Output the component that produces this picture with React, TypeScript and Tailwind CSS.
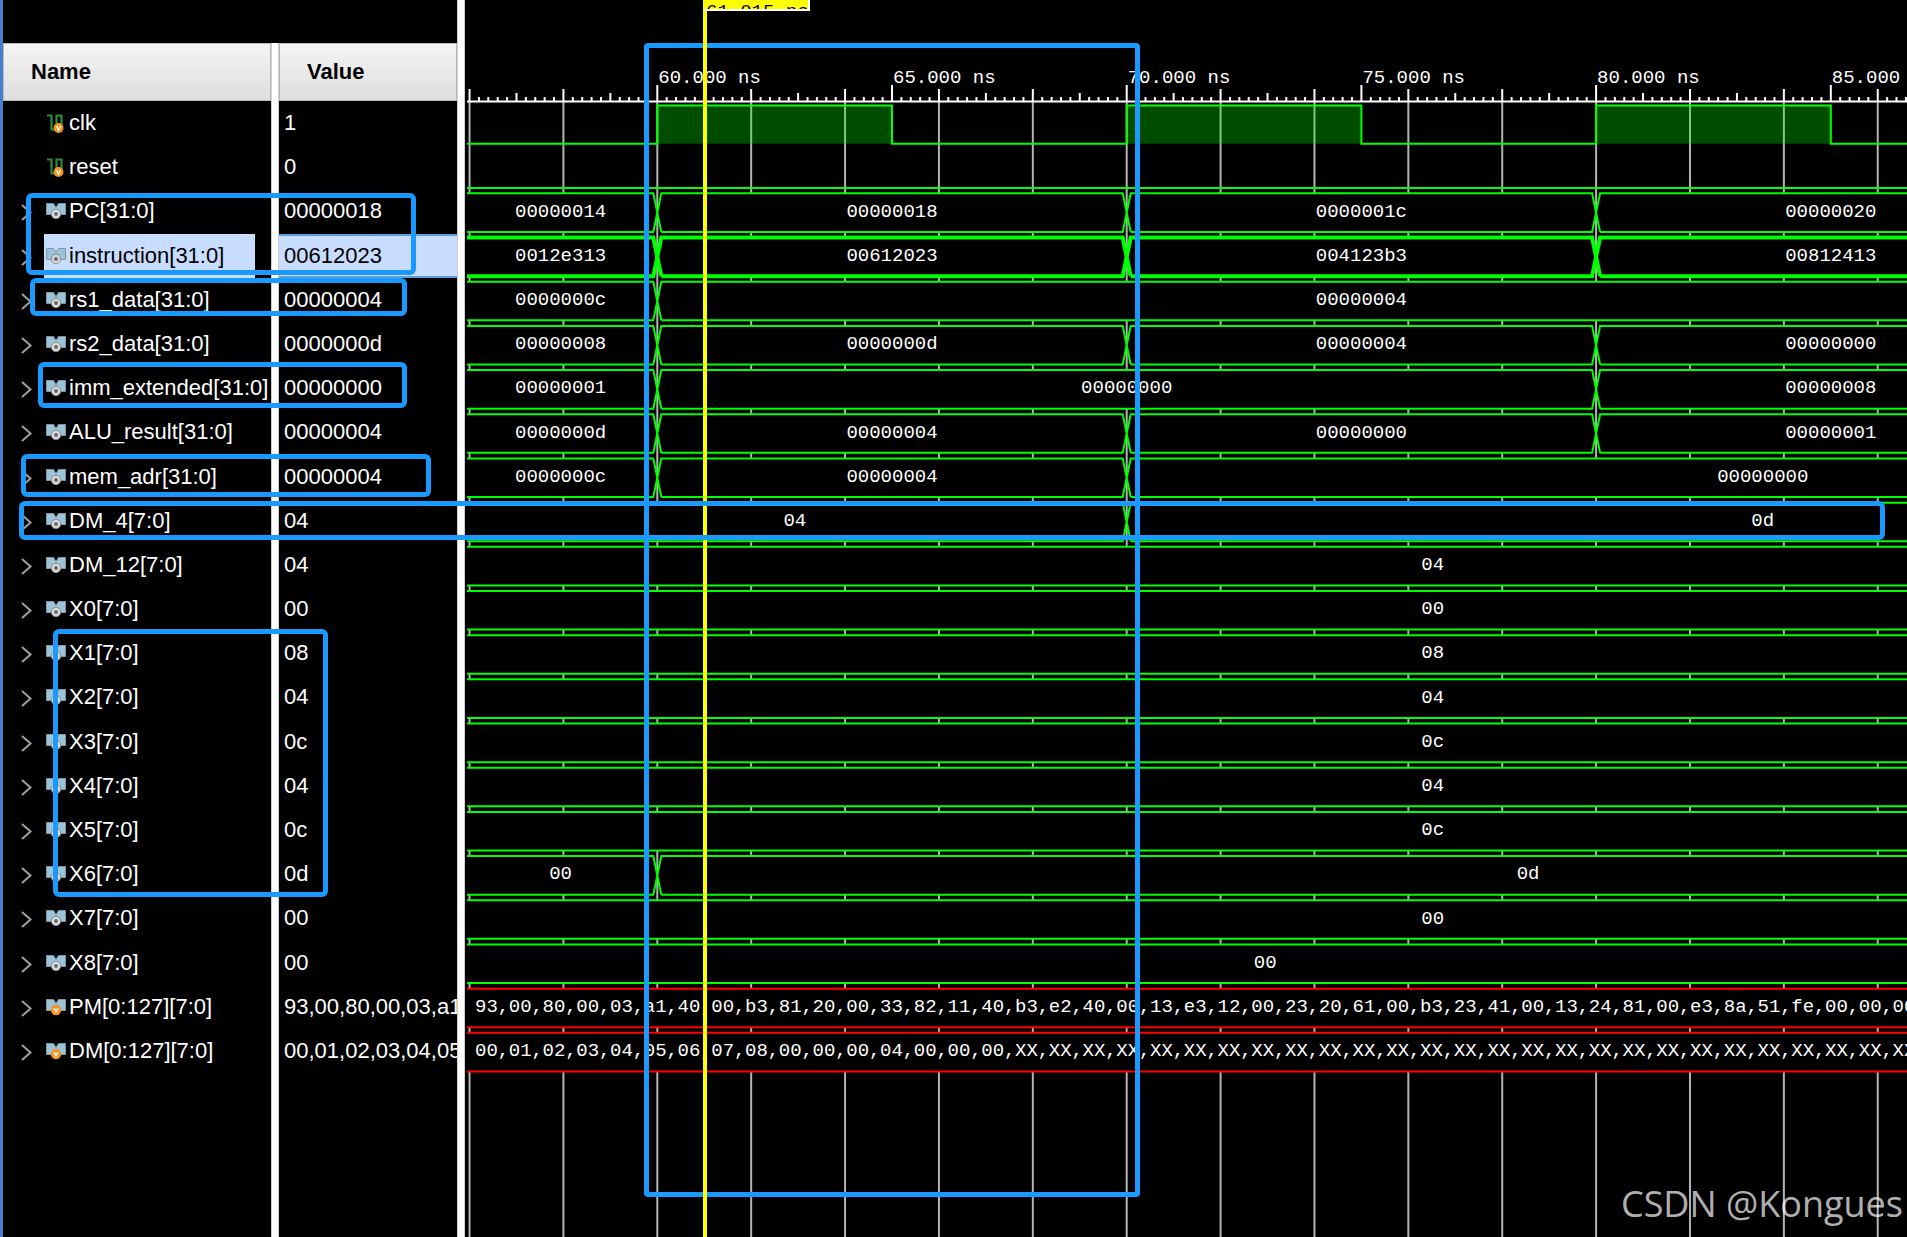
import React from "react";

type Segment = {
  from?: number;
  to?: number;
  value: string;
  labelAt: number;
};

type Signal = {
  name: string;
  value: string;
  kind: "wire" | "bus" | "memory";
  selected?: boolean;
  segments?: Segment[];
  items?: string[];
};

const PM =
  "93,00,80,00,03,a1,40,00,b3,81,20,00,33,82,11,40,b3,e2,40,00,13,e3,12,00,23,20,61,00,b3,23,41,00,13,24,81,00,e3,8a,51,fe,00,00,00";
const DM =
  "00,01,02,03,04,05,06,07,08,00,00,00,04,00,00,00" + ",XX".repeat(27);

const constant = (value: string, labelAt = 76.52): Segment[] => [{ value, labelAt }];

const signals: Signal[] = [
  { name: "clk", value: "1", kind: "wire" },
  { name: "reset", value: "0", kind: "wire" },
  {
    name: "PC[31:0]",
    value: "00000018",
    kind: "bus",
    segments: [
      { to: 60, value: "00000014", labelAt: 57.94 },
      { from: 60, to: 70, value: "00000018", labelAt: 65 },
      { from: 70, to: 80, value: "0000001c", labelAt: 75 },
      { from: 80, value: "00000020", labelAt: 85 },
    ],
  },
  {
    name: "instruction[31:0]",
    value: "00612023",
    kind: "bus",
    selected: true,
    segments: [
      { to: 60, value: "0012e313", labelAt: 57.94 },
      { from: 60, to: 70, value: "00612023", labelAt: 65 },
      { from: 70, to: 80, value: "004123b3", labelAt: 75 },
      { from: 80, value: "00812413", labelAt: 85 },
    ],
  },
  {
    name: "rs1_data[31:0]",
    value: "00000004",
    kind: "bus",
    segments: [
      { to: 60, value: "0000000c", labelAt: 57.94 },
      { from: 60, value: "00000004", labelAt: 75 },
    ],
  },
  {
    name: "rs2_data[31:0]",
    value: "0000000d",
    kind: "bus",
    segments: [
      { to: 60, value: "00000008", labelAt: 57.94 },
      { from: 60, to: 70, value: "0000000d", labelAt: 65 },
      { from: 70, to: 80, value: "00000004", labelAt: 75 },
      { from: 80, value: "00000000", labelAt: 85 },
    ],
  },
  {
    name: "imm_extended[31:0]",
    value: "00000000",
    kind: "bus",
    segments: [
      { to: 60, value: "00000001", labelAt: 57.94 },
      { from: 60, to: 80, value: "00000000", labelAt: 70 },
      { from: 80, value: "00000008", labelAt: 85 },
    ],
  },
  {
    name: "ALU_result[31:0]",
    value: "00000004",
    kind: "bus",
    segments: [
      { to: 60, value: "0000000d", labelAt: 57.94 },
      { from: 60, to: 70, value: "00000004", labelAt: 65 },
      { from: 70, to: 80, value: "00000000", labelAt: 75 },
      { from: 80, value: "00000001", labelAt: 85 },
    ],
  },
  {
    name: "mem_adr[31:0]",
    value: "00000004",
    kind: "bus",
    segments: [
      { to: 60, value: "0000000c", labelAt: 57.94 },
      { from: 60, to: 70, value: "00000004", labelAt: 65 },
      { from: 70, value: "00000000", labelAt: 83.55 },
    ],
  },
  {
    name: "DM_4[7:0]",
    value: "04",
    kind: "bus",
    segments: [
      { to: 70, value: "04", labelAt: 62.93 },
      { from: 70, value: "0d", labelAt: 83.55 },
    ],
  },
  { name: "DM_12[7:0]", value: "04", kind: "bus", segments: constant("04") },
  { name: "X0[7:0]", value: "00", kind: "bus", segments: constant("00") },
  { name: "X1[7:0]", value: "08", kind: "bus", segments: constant("08") },
  { name: "X2[7:0]", value: "04", kind: "bus", segments: constant("04") },
  { name: "X3[7:0]", value: "0c", kind: "bus", segments: constant("0c") },
  { name: "X4[7:0]", value: "04", kind: "bus", segments: constant("04") },
  { name: "X5[7:0]", value: "0c", kind: "bus", segments: constant("0c") },
  {
    name: "X6[7:0]",
    value: "0d",
    kind: "bus",
    segments: [
      { to: 60, value: "00", labelAt: 57.94 },
      { from: 60, value: "0d", labelAt: 78.55 },
    ],
  },
  { name: "X7[7:0]", value: "00", kind: "bus", segments: constant("00") },
  { name: "X8[7:0]", value: "00", kind: "bus", segments: constant("00", 72.95) },
  { name: "PM[0:127][7:0]", value: PM, kind: "memory", items: PM.split(",") },
  { name: "DM[0:127][7:0]", value: DM, kind: "memory", items: DM.split(",") },
];

// Waveform scale, in px
const PX_PER_NS = 46.94;
const HEADER = 101;
const ROW = 972 / signals.length;
const PLOT_END = 4000;

const timeX = (t: number) => 192.3 + (t - 60) * PX_PER_NS;

function range(from: number, to: number, step: number) {
  const out: number[] = [];
  const count = Math.round((to - from) / step);
  for (let i = 0; i <= count; i++) out.push(from + i * step);
  return out;
}

function WireIcon() {
  return (
    <svg className="h-5 w-5 shrink-0" viewBox="0 0 20 20" fill="none">
      <path d="M1 2.5h5M5.500 1.500v15.500M10.500 17V2.500h5V14M5 16.500h6" stroke="#2f8a3e" strokeWidth="2.200" />
      <circle cx="12.5" cy="15" r="5" fill="#f7941e" />
      <path d="M10.500 13l2 4.200 2-4.200" stroke="#fff" strokeWidth="1.400" />
    </svg>
  );
}

function BusIcon({ memory }: { memory: boolean }) {
  return (
    <svg className="h-5 w-5 shrink-0" viewBox="0 0 20 20" fill="none">
      <path d="M.5 2.500h7l2.500 4 2.500-4h7v11h-19z" fill="#9cc4d8" stroke="#7d98a5" />
      {memory ? (
        <>
          <circle cx="10" cy="13" r="5.200" fill="#f7941e" />
          <path d="M8 11l2 4.200L12 11" stroke="#fff" strokeWidth="1.400" />
        </>
      ) : (
        <>
          <circle cx="10" cy="13" r="4.700" fill="#dcdcdc" stroke="#8a8a8a" />
          <circle cx="10" cy="13" r="2" fill="#6b6b6b" />
        </>
      )}
    </svg>
  );
}

function SignalTable() {
  return (
    <table className="flex h-full w-[454px] shrink-0 flex-col bg-black text-[22px] leading-7">
      <thead className="block pt-[43px]">
        <tr className="grid h-[58px] grid-cols-[268px_8px_1fr]">
          <th className="flex items-center border border-[#b9b9bb] bg-linear-to-b from-[#f5f5f5] to-[#dddde0] pl-[27px] text-left font-bold text-black">
            Name
          </th>
          <td className="border-x border-[#cfcfcf] bg-white" />
          <th className="flex items-center border border-[#b9b9bb] bg-linear-to-b from-[#f5f5f5] to-[#dddde0] pl-[27px] text-left font-bold text-black">
            Value
          </th>
        </tr>
      </thead>
      <tbody className="grid h-[972px] auto-rows-fr">
        {signals.map((signal) => (
          <tr key={signal.name} className="grid grid-cols-[268px_8px_1fr] text-white">
            <td className="flex items-center overflow-hidden pl-4">
              <span className="w-[25px] shrink-0">
                {signal.kind !== "wire" && (
                  <button type="button" aria-label={`Expand ${signal.name}`} className="flex">
                    <svg className="h-5 w-4" viewBox="0 0 16 20" fill="none">
                      <path d="M3 4l8.500 7.500L3 19" stroke="#a0a0a0" strokeWidth="2" />
                    </svg>
                  </button>
                )}
              </span>
              <span
                className={`flex h-full items-center gap-[3px] whitespace-nowrap pl-0.5 ${
                  signal.selected ? "w-[211px] bg-[#c8dcff] text-black" : ""
                }`}
              >
                {signal.kind === "wire" ? (
                  <WireIcon />
                ) : (
                  <BusIcon memory={signal.kind === "memory"} />
                )}
                {signal.name}
              </span>
            </td>
            <td className="border-x border-[#cfcfcf] bg-white" />
            <td
              className={`flex items-center overflow-hidden whitespace-nowrap pl-[5px] ${
                signal.selected ? "border-y-2 border-[#5aa0dc] bg-[#c8dcff] text-black" : ""
              }`}
            >
              {signal.value.slice(0, 17)}
            </td>
          </tr>
        ))}
      </tbody>
      <tfoot className="grid flex-1">
        <tr className="grid grid-cols-[268px_8px_1fr]">
          <td />
          <td className="border-x border-[#cfcfcf] bg-white" />
          <td />
        </tr>
      </tfoot>
    </table>
  );
}

function Ruler() {
  return (
    <g stroke="#fff">
      <path d={`M2 ${HEADER + 0.5}H${PLOT_END}`} strokeWidth="2" />
      {range(56, 90, 0.2).map((t) => {
        const tenths = Math.round(t * 10);
        let height = 4;
        if (tenths % 10 === 0) height = 8;
        if (tenths % 20 === 0) height = 12;
        if (tenths % 50 === 0 && tenths >= 600) height = 16;
        return <path key={tenths} d={`M${timeX(t)} ${HEADER}v-${height}`} strokeWidth="2" />;
      })}
      {range(60, 85, 5).map((t) => (
        <text key={t} x={timeX(t) + 1} y="83" fill="#fff" stroke="none">
          {t}.000 ns
        </text>
      ))}
    </g>
  );
}

function BusWave({ signal, row }: { signal: Signal; row: number }) {
  const top = HEADER + row * ROW + 4;
  const bottom = top + 38.6;
  const mid = (top + bottom) / 2;
  const color = signal.kind === "memory" ? "#f00" : "#0f0";
  const width = signal.selected ? 4 : 2;
  const segments = signal.segments ?? [];

  return (
    <g>
      {signal.items && (
        <>
          <path d={`M2 ${top}H${PLOT_END}V${bottom}H2z`} fill="#000" />
          <path
            d={`M2 ${top}H${PLOT_END}M2 ${bottom}H${PLOT_END}`}
            stroke={color}
            strokeWidth={width}
          />
          <text y={mid + 4} fill="#fff">
            {signal.items.map((item, i) => (
              <tspan key={i} x={10 + (i * 135) / 4}>
                {item},
              </tspan>
            ))}
          </text>
        </>
      )}
      {segments.map((s, i) => {
        const left = s.from
          ? `M${timeX(s.from) + 4} ${bottom}L${timeX(s.from)} ${mid}L${timeX(s.from) + 4} ${top}`
          : `M2 ${top}`;
        const fillLeft = s.from ? left : `M2 ${bottom}V${top}`;
        const end = s.to ? timeX(s.to) : PLOT_END;
        const right = s.to
          ? `H${end - 4}L${end} ${mid}L${end - 4} ${bottom}`
          : `H${end}V${bottom}`;
        const close = s.from ? `H${timeX(s.from) + 4}` : "H2";
        return (
          <React.Fragment key={i}>
            <path d={fillLeft + right + close} fill="#000" />
            <path d={left + right + close} fill="none" stroke={color} strokeWidth={width} />
            <text x={timeX(s.labelAt)} y={mid + 4} textAnchor="middle" fill="#fff">
              {s.value}
            </text>
          </React.Fragment>
        );
      })}
    </g>
  );
}

function Waveform() {
  const high = HEADER + 4.5;
  const low = HEADER + 42.7;
  return (
    <svg
      className="block h-full w-full font-['Liberation_Mono',monospace] text-[19px]"
      aria-label="Waveform"
    >
      {range(56, 90, 2).map((t) => (
        <path key={t} d={`M${timeX(t)} ${HEADER}V4000`} stroke="#b4b4b4" strokeWidth="2" />
      ))}
      {/* clk */}
      {[60, 70, 80].map((t) => (
        <rect
          key={t}
          x={timeX(t)}
          y={high}
          width={5 * PX_PER_NS}
          height={low - high}
          fill="#0f0"
          fillOpacity="0.3"
        />
      ))}
      <path
        d={
          `M2 ${low}` +
          [60, 70, 80].map((t) => `H${timeX(t)}V${high}H${timeX(t + 5)}V${low}`).join("") +
          `H${PLOT_END}`
        }
        fill="none"
        stroke="#0f0"
        strokeWidth="2"
      />
      {/* reset */}
      <path d={`M2 ${HEADER + ROW + 42.7}H${PLOT_END}`} stroke="#0f0" strokeWidth="2" />
      {signals.map(
        (signal, row) =>
          signal.kind !== "wire" && <BusWave key={signal.name} signal={signal} row={row} />
      )}
      <Ruler />
    </svg>
  );
}

const marks = [
  "left-[26px] top-[193px] h-[82px] w-[390px]",
  "left-[30px] top-[278px] h-[38px] w-[377px]",
  "left-[38px] top-[362px] h-[46px] w-[369px]",
  "left-[21px] top-[454px] h-[43px] w-[410px]",
  "left-[19px] top-[501px] h-[39px] w-[1866px]",
  "left-[53px] top-[629px] h-[268px] w-[275px]",
];

export default function App() {
  return (
    <div className="relative flex h-screen overflow-hidden border-l-3 border-[#4a7ccc] bg-black font-['Liberation_Sans',Arial,sans-serif]">
      <SignalTable />
      <div className="w-2 shrink-0 border-x border-[#cfcfcf] bg-white" />
      <main className="relative min-w-0 flex-1 overflow-hidden">
        <Waveform />
        <div className="absolute left-[179px] top-[43px] h-[1154px] w-[496px] rounded-sm border-5 border-[#1a99ff]" />

        {/* time cursor */}
        <div className="absolute left-[238px] top-0 h-full w-1 bg-[#ff0]" />
        <div className="absolute left-[239px] top-0 flex h-[11px] w-[106px] items-start overflow-hidden border-b-2 border-r-2 border-white bg-[#ff0] pl-0.5 font-['Liberation_Mono',monospace] text-[19px] leading-6 text-black">
          <span className="whitespace-nowrap">61.015 ns</span>
        </div>
        <div className="absolute bottom-2 right-1 font-['Open_Sans',sans-serif] text-4xl leading-[50px] text-white/70">
          CSDN @Kongues
        </div>
      </main>
      <div className="pointer-events-none absolute inset-y-0 -left-[3px] right-0">
        {marks.map((mark) => (
          <div key={mark} className={`absolute rounded-md border-5 border-[#1a99ff] ${mark}`} />
        ))}
      </div>
    </div>
  );
}
